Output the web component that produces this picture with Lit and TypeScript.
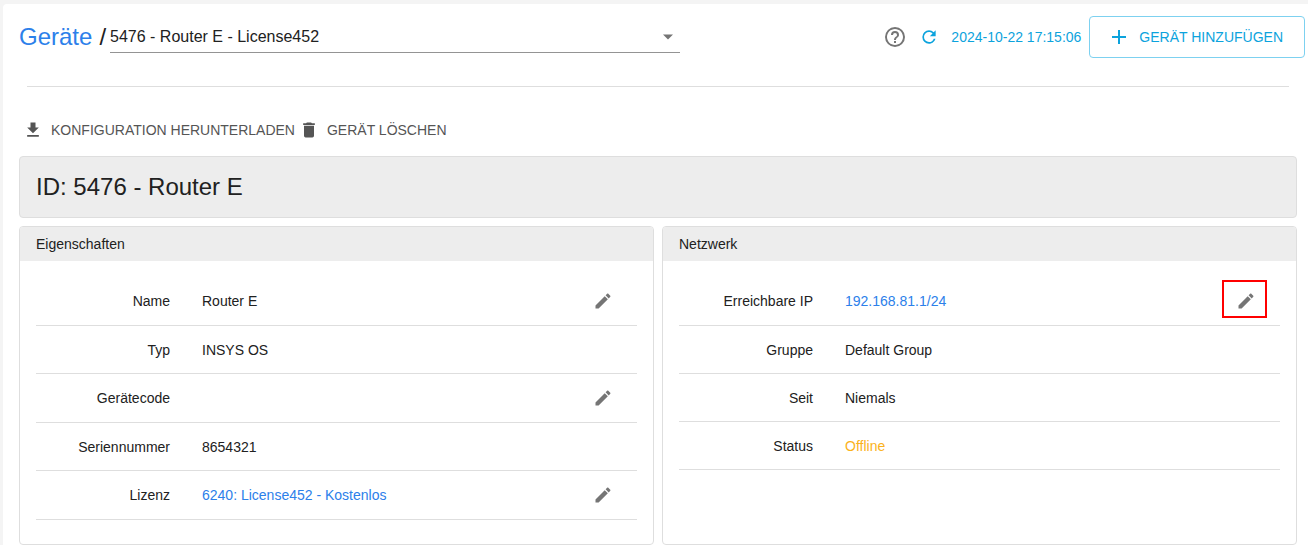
import { LitElement, html, css, svg, nothing } from "lit";
import { customElement, property } from "lit/decorators.js";

const icons = {
  download: svg`<path d="M5 20h14v-2H5m14-9h-4V3H9v6H5l7 7z"/>`,
  trash: svg`<path d="M19 4h-3.5l-1-1h-5l-1 1H5v2h14M6 19a2 2 0 0 0 2 2h8a2 2 0 0 0 2-2V7H6z"/>`,
  pencil: svg`<path d="M20.71 7.04c.39-.39.39-1.04 0-1.41l-2.34-2.34c-.37-.39-1.02-.39-1.41 0l-1.84 1.83 3.75 3.75M3 17.25V21h3.75L17.81 9.93l-3.75-3.75z"/>`,
  plus: svg`<path d="M19 13h-6v6h-2v-6H5v-2h6V5h2v6h6z"/>`,
  refresh: svg`<path d="M17.65 6.35A7.958 7.958 0 0 0 12 4a8 8 0 0 0-8 8 8 8 0 0 0 8 8c3.73 0 6.84-2.55 7.73-6h-2.08A5.99 5.99 0 0 1 12 18a6 6 0 0 1-6-6 6 6 0 0 1 6-6c1.66 0 3.14.69 4.22 1.78L13 11h7V4z"/>`,
  help: svg`<path d="M11 18h2v-2h-2zm1-16A10 10 0 0 0 2 12a10 10 0 0 0 10 10 10 10 0 0 0 10-10A10 10 0 0 0 12 2m0 18c-4.41 0-8-3.59-8-8s3.59-8 8-8 8 3.59 8 8-3.59 8-8 8m0-14a4 4 0 0 0-4 4h2a2 2 0 0 1 2-2 2 2 0 0 1 2 2c0 2-3 1.75-3 5h2c0-2.25 3-2.5 3-5a4 4 0 0 0-4-4"/>`,
  caret: svg`<path d="M6 9l6 6 6-6z"/>`,
};

type IconName = keyof typeof icons;

interface Field {
  label: string;
  value: string;
  kind?: "link" | "warning";
  editable?: boolean;
  marked?: boolean;
}

@customElement("app-icon")
export class AppIcon extends LitElement {
  static styles = css`
    :host {
      display: inline-flex;
      flex: none;
      width: 20px;
      height: 20px;
    }
    .glyph {
      width: 100%;
      height: 100%;
      fill: currentColor;
    }
  `;

  @property() name: IconName = "plus";

  render() {
    return html`<svg class="glyph" viewBox="0 0 24 24" aria-hidden="true">${icons[this.name]}</svg>`;
  }
}

@customElement("property-panel")
export class PropertyPanel extends LitElement {
  static styles = css`
    :host {
      display: block;
      box-sizing: border-box;
      border: 1px solid #dedede;
      border-radius: 4px;
      overflow: hidden;
      background: #fff;
    }
    .heading {
      margin: 0;
      padding: 0 16px;
      background: #ededed;
      font-size: 14px;
      font-weight: 400;
      line-height: 34px;
    }
    .fields {
      margin: 0;
      padding: 16px 16px 24px;
    }
    .row {
      position: relative;
      display: grid;
      grid-template-columns: 134px 1fr auto;
      column-gap: 32px;
      align-items: center;
      min-height: 47px;
      padding-right: 10px;
      border-bottom: 1px solid #dedede;
    }
    .label {
      text-align: right;
    }
    .value {
      margin: 0;
    }
    .link {
      color: #2c80ea;
      text-decoration: none;
    }
    .warning {
      color: #fbb21b;
    }
    .edit {
      display: flex;
      align-items: center;
      justify-content: center;
      width: 48px;
      height: 48px;
      margin: 0;
      padding: 0;
      border: 0;
      background: none;
      color: #757575;
      cursor: pointer;
    }
    .marker {
      position: absolute;
      top: 3px;
      right: 13px;
      box-sizing: border-box;
      width: 45px;
      height: 38px;
      border: 2px solid #f00;
      pointer-events: none;
    }
  `;

  @property() heading = "";
  @property({ attribute: false }) fields: Field[] = [];

  private renderValue(field: Field) {
    if (field.kind === "link") return html`<a class="link" href="#">${field.value}</a>`;
    if (field.kind === "warning") return html`<span class="warning">${field.value}</span>`;
    return field.value;
  }

  render() {
    return html`
      <h3 class="heading">${this.heading}</h3>
      <dl class="fields">
        ${this.fields.map(
          (field) => html`
            <div class="row">
              <dt class="label">${field.label}</dt>
              <dd class="value">${this.renderValue(field)}</dd>
              ${field.editable
                ? html`<button class="edit" type="button" aria-label=${field.label}>
                    <app-icon name="pencil"></app-icon>
                  </button>`
                : nothing}
              ${field.marked ? html`<span class="marker"></span>` : nothing}
            </div>
          `
        )}
      </dl>
    `;
  }
}

@customElement("app-root")
export class AppRoot extends LitElement {
  static styles = css`
    :host {
      display: block;
      box-sizing: border-box;
      min-height: 100vh;
      padding: 4px 0 0 3px;
      background: #f4f4f4;
      color: #212121;
      font-family: "Liberation Sans", Arial, sans-serif;
      font-size: 14px;
      line-height: 20px;
    }
    .sheet {
      box-sizing: border-box;
      min-height: calc(100vh - 4px);
      border-top-left-radius: 4px;
      background: #fff;
    }
    .header {
      display: flex;
      align-items: center;
      padding: 12px 3px 0 16px;
    }
    .crumb {
      display: flex;
      gap: 7px;
      margin: 0;
      font-size: 24px;
      font-weight: 400;
      line-height: 42px;
    }
    .crumb-link {
      color: #2c80ea;
      text-decoration: none;
    }
    .picker {
      display: grid;
      flex: 0 1 570px;
      align-items: center;
      margin-left: 4px;
      border-bottom: 1px solid #949494;
    }
    .select {
      grid-area: 1 / 1;
      width: 100%;
      height: 30px;
      margin: 0;
      padding: 0;
      border: 0;
      appearance: none;
      background: none;
      color: inherit;
      font: inherit;
      font-size: 16px;
    }
    .caret {
      grid-area: 1 / 1;
      justify-self: end;
      margin-right: 2px;
      color: #757575;
      pointer-events: none;
    }
    .actions {
      display: flex;
      align-items: center;
      gap: 8px;
      margin-left: auto;
    }
    .button {
      display: flex;
      align-items: center;
      gap: 8px;
      margin: 0;
      padding: 0;
      border: 0;
      background: none;
      color: #555;
      font: inherit;
      white-space: nowrap;
      cursor: pointer;
    }
    .help {
      color: #757575;
    }
    .help-icon {
      width: 24px;
      height: 24px;
    }
    .refresh {
      gap: 12px;
      padding-left: 4px;
      color: #0ca3dd;
    }
    .add {
      height: 42px;
      padding: 0 21px 0 17px;
      border: 1px solid #7dd1f0;
      border-radius: 4px;
      color: #0ca3dd;
    }
    .add-icon {
      width: 24px;
      height: 24px;
    }
    .rule {
      height: 1px;
      margin: 28px 19px 0 24px;
      border: 0;
      background: #dedede;
    }
    .toolbar {
      display: flex;
      gap: 4px;
      padding: 33px 20px 16px;
    }
    .content {
      display: grid;
      gap: 8px;
      grid-template-columns: 1fr 1fr;
      padding: 0 11px 0 16px;
    }
    .title {
      grid-column: 1 / -1;
      margin: 0;
      padding: 0 16px;
      border: 1px solid #dedede;
      border-radius: 4px;
      background: #ededed;
      font-size: 24px;
      font-weight: 400;
      line-height: 60px;
    }
  `;

  private properties: Field[] = [
    { label: "Name", value: "Router E", editable: true },
    { label: "Typ", value: "INSYS OS" },
    { label: "Gerätecode", value: "", editable: true },
    { label: "Seriennummer", value: "8654321" },
    { label: "Lizenz", value: "6240: License452 - Kostenlos", kind: "link", editable: true },
  ];

  private network: Field[] = [
    { label: "Erreichbare IP", value: "192.168.81.1/24", kind: "link", editable: true, marked: true },
    { label: "Gruppe", value: "Default Group" },
    { label: "Seit", value: "Niemals" },
    { label: "Status", value: "Offline", kind: "warning" },
  ];

  render() {
    return html`
      <main class="sheet">
        <header class="header">
          <h1 class="crumb"><a class="crumb-link" href="#">Geräte</a><span>/</span></h1>
          <div class="picker">
            <select class="select" aria-label="Gerät">
              <option>5476 - Router E - License452</option>
            </select>
            <app-icon class="caret" name="caret"></app-icon>
          </div>
          <div class="actions">
            <button class="button help" type="button" aria-label="Hilfe">
              <app-icon class="help-icon" name="help"></app-icon>
            </button>
            <button class="button refresh" type="button">
              <app-icon name="refresh"></app-icon>2024-10-22 17:15:06
            </button>
            <button class="button add" type="button">
              <app-icon class="add-icon" name="plus"></app-icon>GERÄT HINZUFÜGEN
            </button>
          </div>
        </header>
        <hr class="rule" />
        <div class="toolbar">
          <button class="button" type="button">
            <app-icon name="download"></app-icon>KONFIGURATION HERUNTERLADEN
          </button>
          <button class="button" type="button">
            <app-icon name="trash"></app-icon>GERÄT LÖSCHEN
          </button>
        </div>
        <div class="content">
          <h2 class="title">ID: 5476 - Router E</h2>
          <property-panel heading="Eigenschaften" .fields=${this.properties}></property-panel>
          <property-panel heading="Netzwerk" .fields=${this.network}></property-panel>
        </div>
      </main>
    `;
  }
}
